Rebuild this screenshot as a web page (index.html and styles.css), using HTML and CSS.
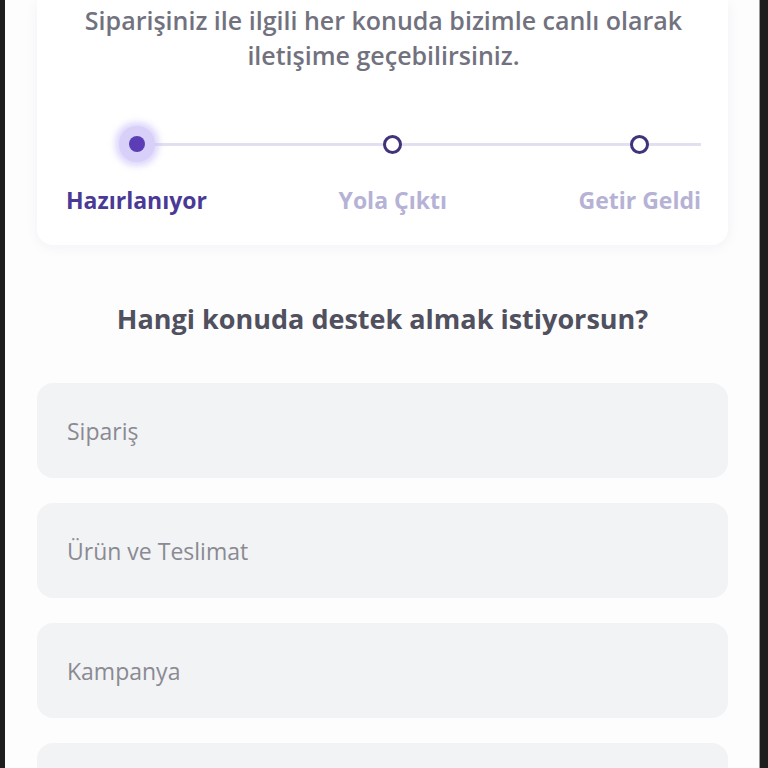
FILE: index.html
```html
<!DOCTYPE html>
<html lang="tr">
<head>
  <meta charset="UTF-8">
  <meta name="viewport" content="width=device-width, initial-scale=1.0">
  <title>Canlı Destek</title>
  <link rel="stylesheet" href="styles.css">
</head>
<body>
  <div class="screen">
    <div class="status-card">
      <p class="status-text">Siparişiniz ile ilgili her konuda bizimle canlı olarak iletişime geçebilirsiniz.</p>
      <div class="stepper">
        <div class="step active">
          <span class="dot-wrap"><span class="dot"></span></span>
          <span class="step-label">Hazırlanıyor</span>
        </div>
        <div class="step">
          <span class="dot-wrap"><span class="dot"></span></span>
          <span class="step-label">Yola Çıktı</span>
        </div>
        <div class="step">
          <span class="dot-wrap"><span class="dot"></span></span>
          <span class="step-label">Getir Geldi</span>
        </div>
      </div>
    </div>

    <h2 class="question">Hangi konuda destek almak istiyorsun?</h2>

    <div class="topics">
      <div class="topic">Sipariş</div>
      <div class="topic">Ürün ve Teslimat</div>
      <div class="topic">Kampanya</div>
      <div class="topic"></div>
    </div>
  </div>
</body>
</html>
```

FILE: styles.css
```css
body {
  margin: 0;
  background-color: #1e1e1e;
  font-family: "Open Sans", "Noto Sans", sans-serif;
  height: 768px;
  overflow: hidden;
}

.screen {
  margin: 0 8px 0 5px;
  border-right: 1px solid #9a9a9a;
  background-color: #fdfdfe;
  height: 768px;
  padding: 0 31px 0 32px;
  overflow: hidden;
}

.status-card {
  background-color: #fff;
  border-radius: 0 0 16px 16px;
  box-shadow: 0 2px 14px rgba(40, 30, 90, 0.05);
  padding: 3px 27px 31px 29px;
}

.status-text {
  margin: 0;
  text-align: center;
  font-size: 25px;
  font-weight: 600;
  line-height: 35px;
  color: #72727f;
}

.stepper {
  position: relative;
  display: flex;
  justify-content: space-between;
  margin-top: 51px;
}

.stepper::before {
  content: "";
  position: absolute;
  left: 72px;
  right: 0;
  top: 19px;
  height: 3px;
  background-color: #e2dff1;
}

.step {
  display: flex;
  flex-direction: column;
  align-items: center;
  gap: 22px;
  position: relative;
}

.dot-wrap {
  width: 40px;
  height: 40px;
  display: flex;
  justify-content: center;
  align-items: center;
}

.dot {
  width: 13px;
  height: 13px;
  border: 3px solid #41327a;
  border-radius: 50%;
  background-color: #fff;
}

.step.active .dot {
  width: 16px;
  height: 16px;
  border: none;
  background-color: #5b3eb6;
  box-shadow: 0 0 0 10px #d9d0fa, 0 0 6px 14px rgba(200, 188, 248, 0.6);
}

.step-label {
  font-size: 23px;
  font-weight: 700;
  line-height: 28px;
  color: #b6b2d6;
}

.step.active .step-label {
  color: #4a3a95;
}

.question {
  margin: 57px 0 47px;
  text-align: center;
  font-size: 27px;
  font-weight: 700;
  line-height: 34px;
  color: #50505f;
}

.topics {
  display: flex;
  flex-direction: column;
  gap: 25px;
}

.topic {
  height: 95px;
  flex-shrink: 0;
  display: flex;
  align-items: center;
  padding-left: 30px;
  background-color: #f2f3f5;
  border-radius: 16px;
  font-size: 23px;
  color: #8a8a92;
}
```
